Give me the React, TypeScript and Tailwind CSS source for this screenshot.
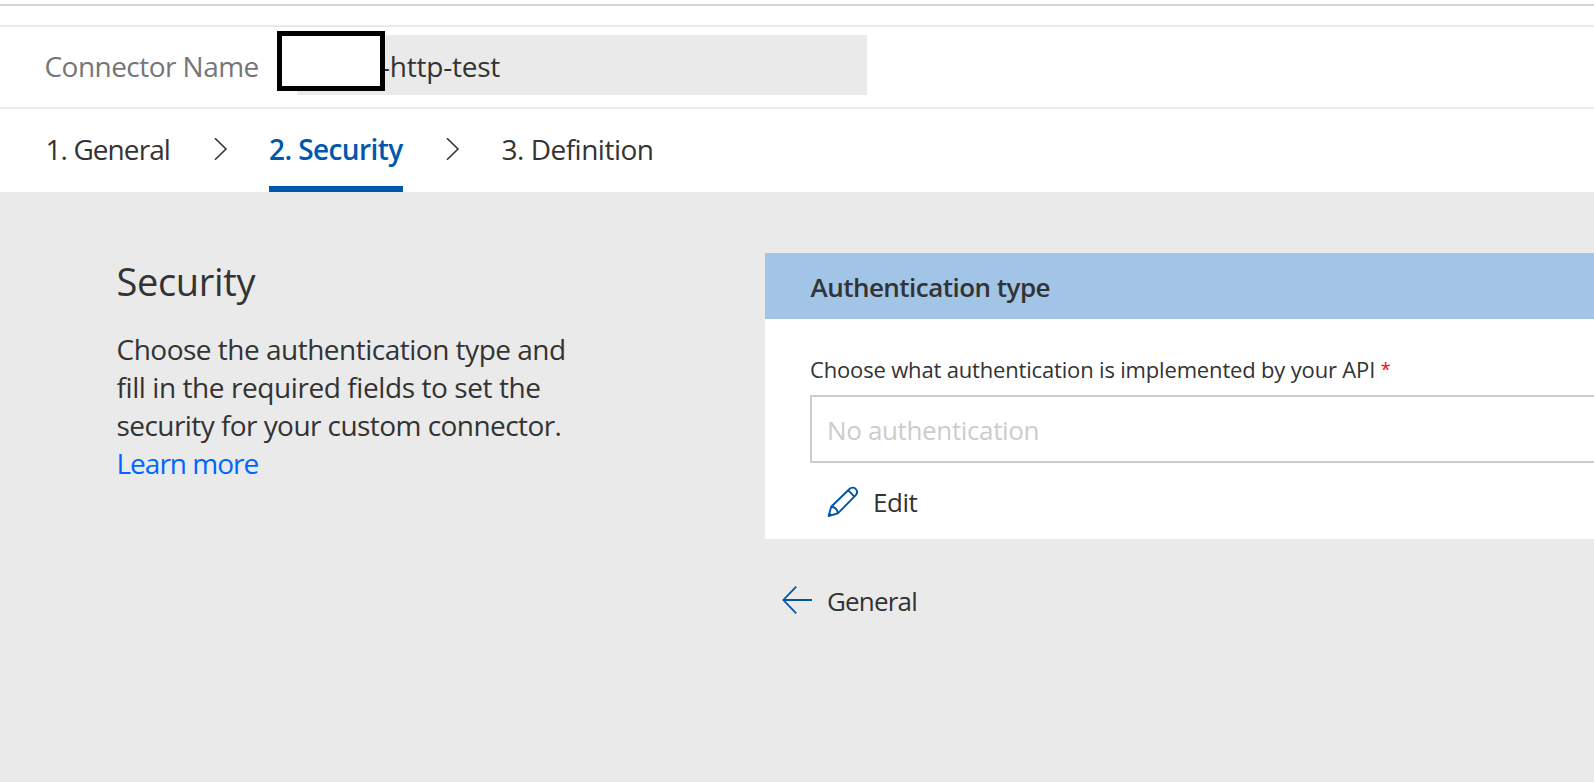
import React from "react";

function Chevron() {
  return (
    <svg viewBox="0 0 14 24" fill="none" className="h-6 w-[14px] shrink-0" stroke="#333" strokeWidth="1.6">
      <path d="M1 1.2 12 12 1 22.8" />
    </svg>
  );
}

function Pencil() {
  return (
    <svg viewBox="0 0 32 32" fill="none" className="h-8 w-8 shrink-0" stroke="#0055a5" strokeWidth="1.9">
      <path d="M1.6 30 4.2 20.8 22.2 3.2C24.2 1.3 27 1.3 28.6 2.9 30.4 4.7 30.4 7.4 28.6 9.4L10.8 27.4Z" strokeLinejoin="round" />
      <path d="M21.2 4.4 27.4 10.6M4.2 20.8C7.8 20.8 10.8 23.8 10.8 27.4" />
      <path d="M1.2 30.6 2.3 26.2 5.6 29.6Z" fill="#0055a5" stroke="none" />
    </svg>
  );
}

function BackArrow() {
  return (
    <svg viewBox="0 0 30 28" fill="none" className="h-7 w-[30px] shrink-0" stroke="#0055a5" strokeWidth="1.8">
      <path d="M14.2 .7 1.4 14 14.2 27.3" />
      <path d="M1 14H30" strokeWidth="2" />
    </svg>
  );
}

export default function App() {
  return (
    <div className="flex h-[782px] w-[1594px] flex-col overflow-hidden bg-white font-['Open_Sans','Noto_Sans',sans-serif] text-[28px] text-[#333]">
      <div className="mt-1 h-[2px] shrink-0 bg-[#d6d6d6]" />

      <header className="mt-[19px] flex h-[84px] shrink-0 items-start border-y-2 border-[#eaeaea] pt-2 pl-[44.5px]">
        <label className="mt-[11px] w-[252.5px] whitespace-nowrap leading-10 tracking-[-0.54px] text-[#767676]">Connector Name</label>
        <div className="relative h-[60px] w-[570px] bg-[#eaeaea] pt-[11px] pl-[84px] leading-10 tracking-[-0.22px]">
          -http-test
          <div className="absolute -top-1 -left-5 h-[60px] w-[108px] border-5 border-black bg-white" />
        </div>
      </header>

      <nav className="flex h-[83px] shrink-0 items-start pl-[45.5px] leading-10 whitespace-nowrap">
        <div className="w-[168px] pt-5 tracking-[-0.92px]">1. General</div>
        <div className="w-[55.5px] pt-[28px]"><Chevron /></div>
        <div className="h-full w-[134px] border-b-6 border-[#0058ad] pt-5 font-semibold tracking-[-0.6px] text-[#0058ad]">2. Security</div>
        <div className="w-[98.5px] pt-[28px] pl-[43px]"><Chevron /></div>
        <div className="pt-5 tracking-[-0.5px]">3. Definition</div>
      </nav>

      <main className="flex flex-1 bg-[#eaeaea]">
        <section className="w-[765px] shrink-0 pt-16 pl-[116.5px]">
          <h1 className="text-[38px] leading-[50px] tracking-[-0.35px]">Security</h1>
          <p className="mt-6 leading-[38px] whitespace-nowrap">
            <span className="block tracking-[-0.5px]">Choose the authentication type and</span>
            <span className="block tracking-[-0.42px]">fill in the required fields to set the</span>
            <span className="block tracking-[-0.56px]">security for your custom connector.</span>
            <a className="block tracking-[-1px] text-[#0066ff]">Learn more</a>
          </p>
        </section>

        <section className="flex-1 pt-[61px] text-[26px]">
          <div className="h-[286px] bg-white">
            <h2 className="h-[66px] bg-[#a1c4e7] pt-px pl-[45.5px] font-semibold leading-[66px] tracking-[-0.53px]">Authentication type</h2>
            <div className="pt-[35px] pl-[45px]">
              <div className="h-[30px] text-[22px] leading-[30px] tracking-[-0.17px]">
                Choose what authentication is implemented by your API <span className="align-[2px] text-[18px] leading-none text-[#f00]">*</span>
              </div>
              <div className="mt-[11px] h-[68px] border-2 border-r-0 border-[#ccc] pt-px pl-[15px] leading-[64px] tracking-[-0.36px] text-[#ccc]">No authentication</div>
            </div>
            <div className="mt-[21px] flex items-start pl-[61.5px] leading-9">
              <div className="mt-[2px]"><Pencil /></div>
              <span className="pl-[14.5px] tracking-[-0.45px]">Edit</span>
            </div>
          </div>
          <div className="mt-11 flex items-start pl-[17px] leading-9">
            <div className="mt-[3px]"><BackArrow /></div>
            <span className="pl-[15px] tracking-[-0.82px]">General</span>
          </div>
        </section>
      </main>
    </div>
  );
}
